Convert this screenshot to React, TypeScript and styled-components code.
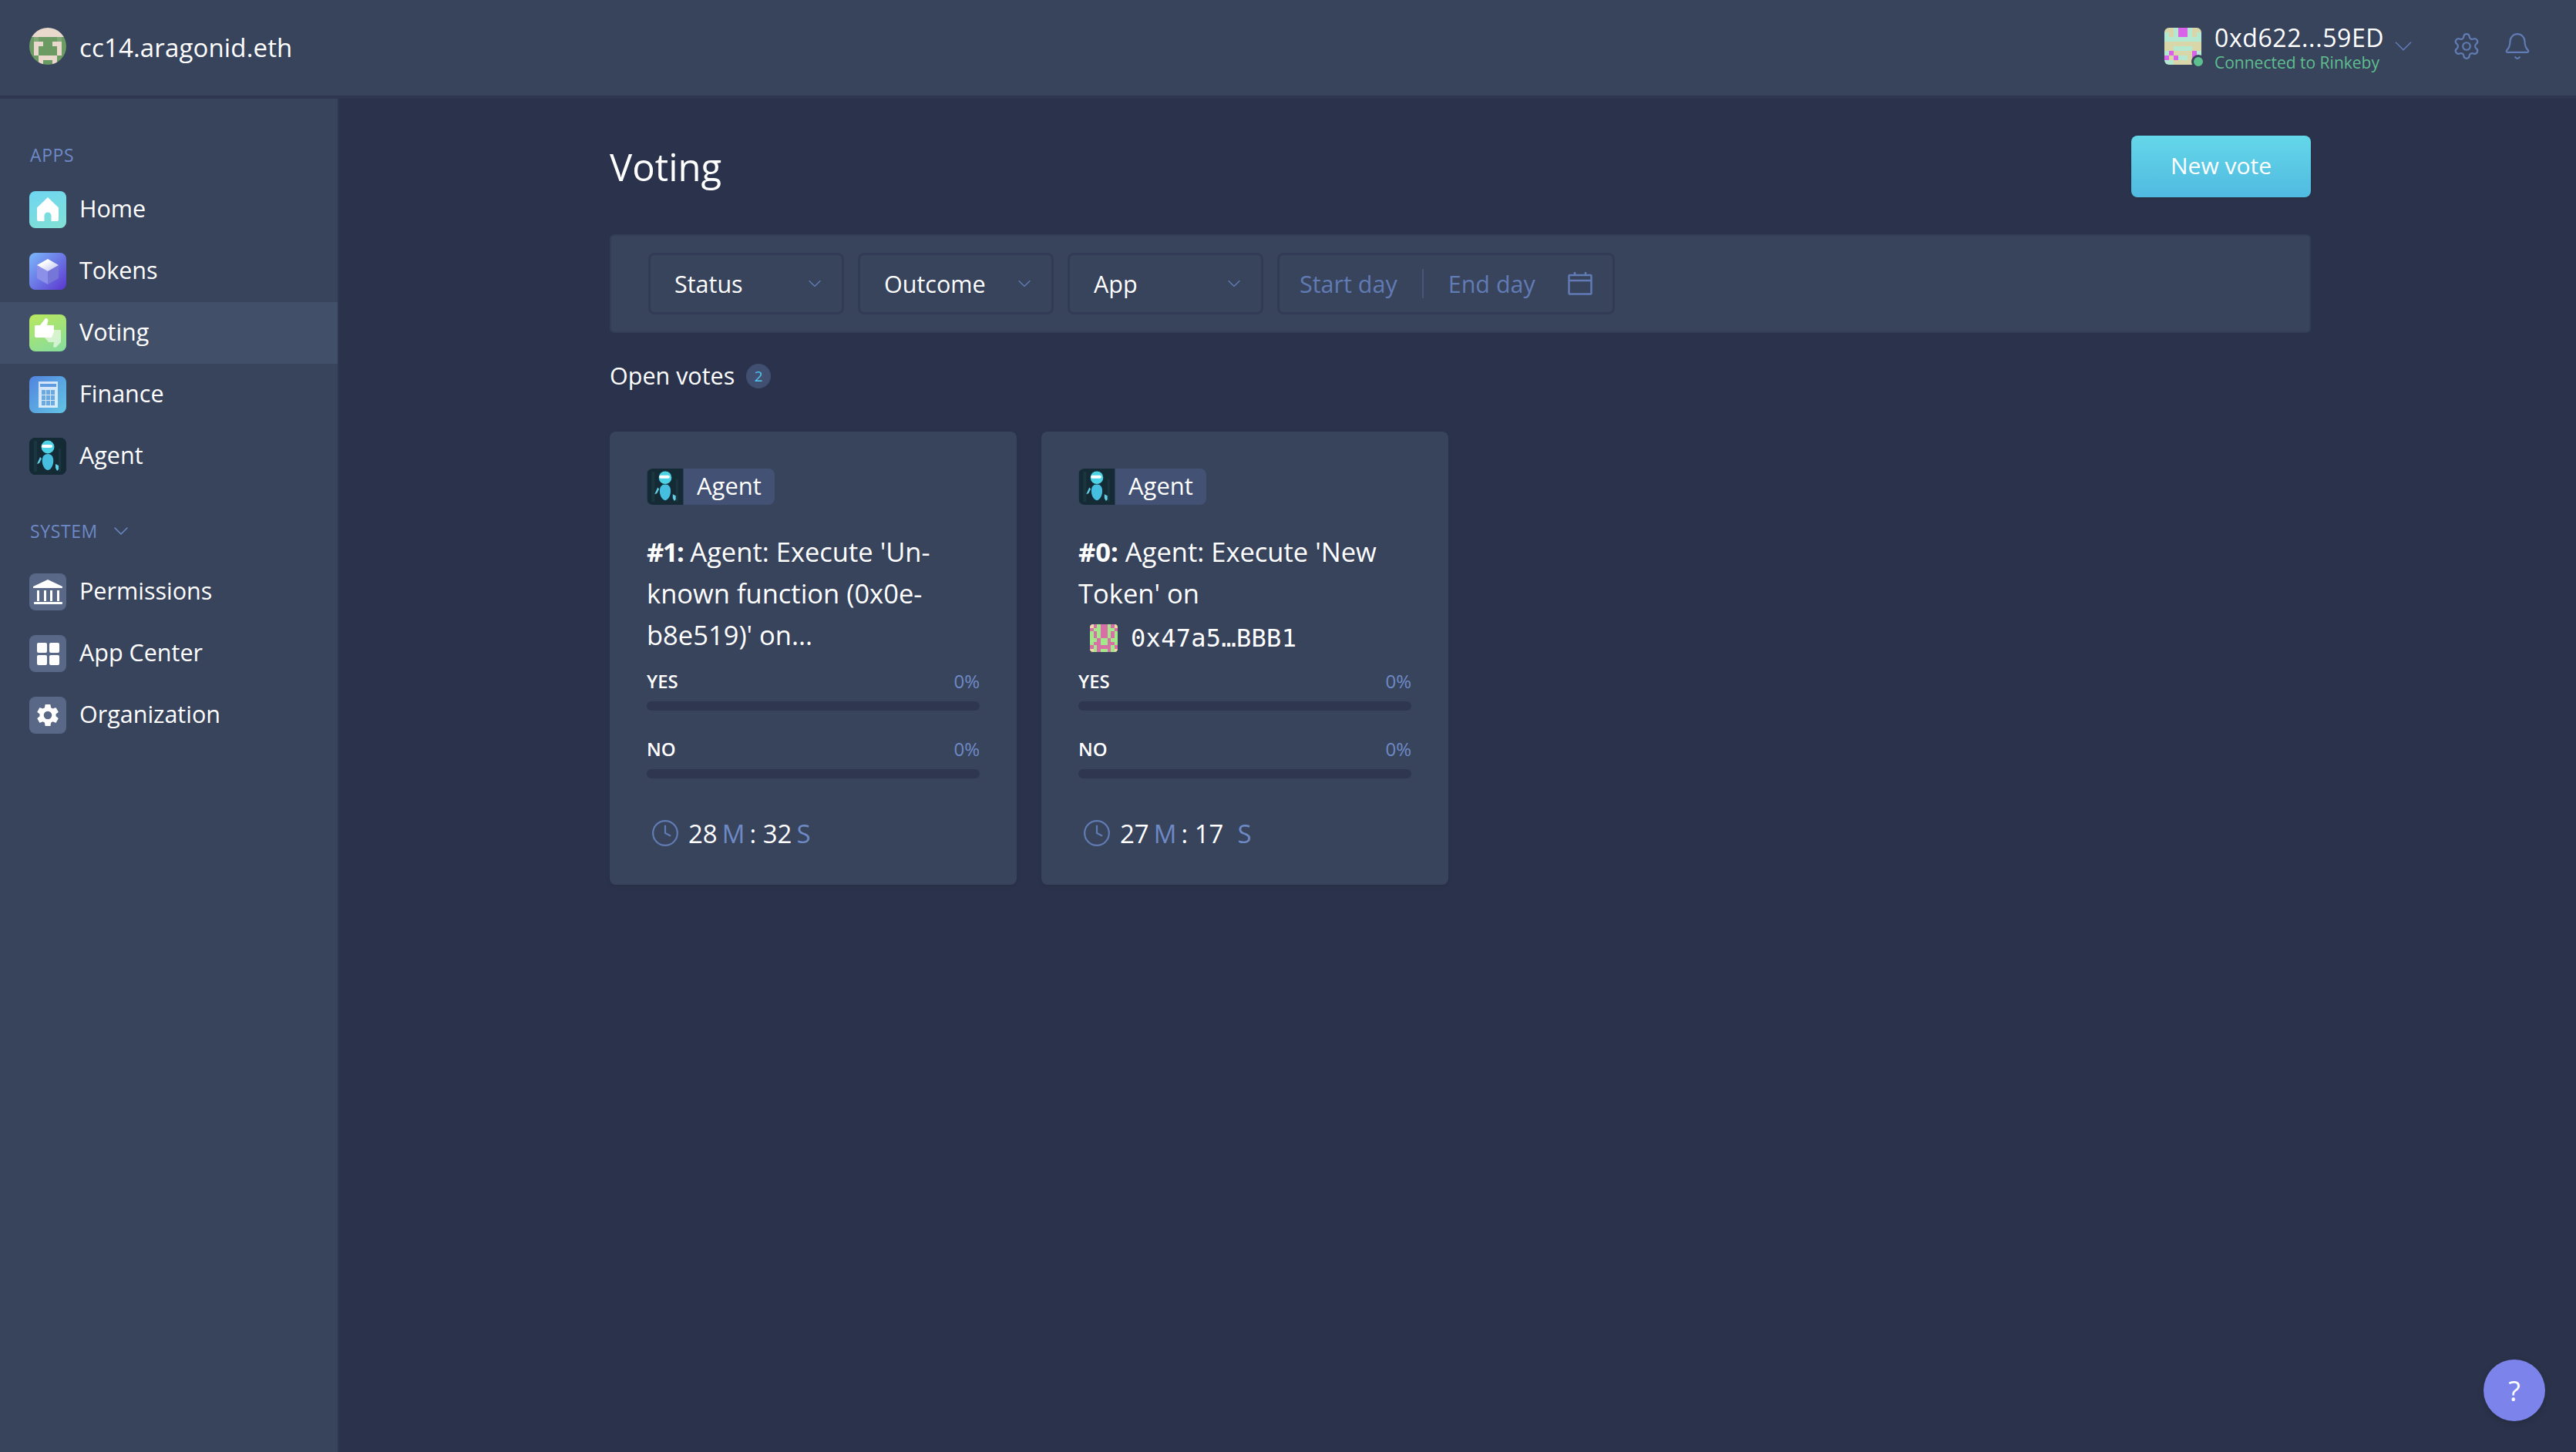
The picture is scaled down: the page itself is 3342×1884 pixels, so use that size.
import styled, { createGlobalStyle } from 'styled-components';
import { Bell, ChevronDown, Clock, Settings } from 'lucide-react';

const BODY_FONT = '"Open Sans", "Noto Sans", sans-serif';
const PAGE_BG = '#2b334c';

const GlobalStyle = createGlobalStyle`
  html, body {
    margin: 0;
    padding: 0;
    height: 100%;
    background: ${PAGE_BG};
  }

  * {
    box-sizing: border-box;
  }

  #root {
    height: 100%;
  }
`;

const Page = styled.div`
  width: 3342px;
  height: 1884px;
  display: flex;
  flex-direction: column;
  position: relative;
  overflow: hidden;
  background: ${PAGE_BG};
  color: #fff;
  font-family: ${BODY_FONT};
`;

const TopBar = styled.header`
  height: 128px;
  flex-shrink: 0;
  display: flex;
  align-items: center;
  justify-content: space-between;
  padding: 0 57px 4px 38px;
  background: #38435c;
  border-bottom: 4px solid #2f3650;
`;

const OrgButton = styled.div`
  display: flex;
  align-items: center;
  gap: 17px;
`;

const OrgName = styled.span`
  padding-top: 3px;
  font-size: 33px;
  letter-spacing: 0.15px;
`;

const AccountGroup = styled.div`
  display: flex;
  align-items: center;
`;

const AccountAvatar = styled.div`
  position: relative;
  width: 48px;
  height: 48px;
  margin-right: 17px;
`;

const OnlineDot = styled.span`
  position: absolute;
  right: -5px;
  bottom: -5px;
  width: 18px;
  height: 18px;
  border-radius: 50%;
  background: #5ebf8f;
  border: 3px solid #38435c;
`;

const AccountText = styled.div`
  display: flex;
  flex-direction: column;
  width: 226px;
  padding-top: 3px;
`;

const AccountName = styled.span`
  font-size: 32px;
  line-height: 38px;
  letter-spacing: 0.6px;
`;

const AccountStatus = styled.span`
  font-size: 21px;
  line-height: 26px;
  color: #5ebf8f;
`;

const HeaderIcon = styled.span<{ $left: number }>`
  display: flex;
  margin-left: ${({ $left }) => $left}px;
  color: #617bb4;
`;

const Body = styled.div`
  flex: 1;
  display: flex;
  min-height: 0;
`;

const Sidebar = styled.nav`
  width: 440px;
  flex-shrink: 0;
  padding-top: 56px;
  background: #38435c;
  border-right: 2px solid #2f3650;
`;

const SectionLabel = styled.div<{ $bottom: number }>`
  display: flex;
  align-items: center;
  gap: 14px;
  height: 34px;
  padding-left: 39px;
  margin-bottom: ${({ $bottom }) => $bottom}px;
  font-size: 23px;
  letter-spacing: 0.6px;
  color: #6e8ac6;
`;

const NavGroup = styled.div`
  margin-bottom: 40px;
`;

const NavItem = styled.div<{ $active?: boolean }>`
  height: 80px;
  display: flex;
  align-items: center;
  gap: 17px;
  padding-left: 38px;
  font-size: 30.5px;
  background: ${({ $active }) => ($active ? '#414f69' : 'transparent')};
`;

const NavLabel = styled.span`
  padding-bottom: 4px;
`;

const AppTile = styled.div<{ $bg: string }>`
  width: 48px;
  height: 48px;
  flex-shrink: 0;
  border-radius: 8px;
  overflow: hidden;
  background: ${({ $bg }) => $bg};

  svg {
    display: block;
  }
`;

const Main = styled.main`
  flex: 1;
  padding: 48px 0 0 351px;
`;

const Content = styled.div`
  width: 2207px;
`;

const TitleRow = styled.div`
  height: 80px;
  display: flex;
  align-items: center;
  justify-content: space-between;
  margin-bottom: 48px;
`;

const Title = styled.h1`
  margin: 0;
  font-size: 49px;
  font-weight: 400;
`;

const PrimaryButton = styled.button`
  width: 233px;
  height: 80px;
  padding: 0 0 4px;
  border: 0;
  border-radius: 8px;
  background: linear-gradient(#64d7e9, #50bae0);
  color: #fff;
  font-family: ${BODY_FONT};
  font-size: 30px;
  box-shadow: 0 1px 3px rgba(0, 0, 0, 0.15);
`;

const FilterBar = styled.div`
  height: 128px;
  display: flex;
  align-items: center;
  gap: 18px;
  padding: 0 48px;
  background: #38435c;
  border: 2px solid #343d56;
  border-radius: 6px;
`;

const FilterButton = styled.div<{ $width: number }>`
  width: ${({ $width }) => $width}px;
  height: 80px;
  display: flex;
  align-items: center;
  justify-content: space-between;
  padding: 0 21px 0 31px;
  border: 3px solid #323b55;
  border-radius: 8px;
  font-size: 30.5px;

  svg {
    color: #617bb4;
  }
`;

const DateText = styled.span`
  color: #617bb4;
`;

const DateDivider = styled.span`
  width: 2px;
  height: 38px;
  margin: 0 32px;
  background: #465578;
`;

const DateRange = styled(FilterButton)`
  justify-content: flex-start;
  padding: 0 26px;

  svg {
    margin-left: auto;
  }
`;

const ListHeading = styled.div`
  display: flex;
  align-items: center;
  gap: 15px;
  height: 32px;
  margin: 40px 0 56px;
  font-size: 30.5px;
`;

const ListHeadingLabel = styled.span`
  padding-bottom: 3px;
`;

const CountBadge = styled.span`
  width: 32px;
  height: 32px;
  display: flex;
  align-items: center;
  justify-content: center;
  border-radius: 50%;
  background: #415070;
  color: #52c4ef;
  font-size: 19px;
`;

const CardRow = styled.div`
  display: flex;
  gap: 32px;
`;

const Card = styled.article`
  width: 528px;
  height: 588px;
  padding: 48px;
  background: #38435c;
  border-radius: 8px;
  box-shadow: 0 2px 4px rgba(0, 0, 0, 0.08);
`;

const AppBadge = styled.div`
  width: 166px;
  height: 47px;
  display: flex;
  align-items: center;
  gap: 17px;
  margin-bottom: 34px;
  overflow: hidden;
  border-radius: 8px;
  background: #435274;
  font-size: 31px;
`;

const AppBadgeLabel = styled.span`
  padding-bottom: 3px;
`;

const AppBadgeIcon = styled.div`
  width: 48px;
  height: 47px;
  flex-shrink: 0;

  svg {
    display: block;
  }
`;

const VoteTitle = styled.div`
  height: 162px;
  margin-bottom: 17px;
  font-size: 34.5px;
  line-height: 54px;
`;

const VoteId = styled.strong<{ $tracking: number }>`
  font-weight: 700;
  letter-spacing: ${({ $tracking }) => $tracking}px;
`;

const AddressLine = styled.div`
  display: flex;
  align-items: center;
  gap: 17px;
  padding: 4px 0 0 15px;
`;

const Address = styled.span`
  font-family: "DejaVu Sans Mono", "Liberation Mono", monospace;
  font-size: 32px;
  letter-spacing: 0.3px;
`;

const OptionRow = styled.div`
  margin-bottom: 34px;
`;

const OptionLabels = styled.div`
  height: 30px;
  display: flex;
  align-items: center;
  justify-content: space-between;
  margin-bottom: 12px;
  font-size: 24px;
  font-weight: 600;
`;

const Percent = styled.span`
  color: #6e8ac6;
  font-weight: 400;
`;

const BarTrack = styled.div`
  height: 12px;
  border-radius: 6px;
  background: #2f3650;
`;

const Timer = styled.div`
  display: flex;
  align-items: center;
  height: 40px;
  margin-top: 51px;
  padding-left: 5px;
  font-size: 33px;

  svg {
    color: #617bb4;
    margin-right: 11px;
  }
`;

const TimerUnit = styled.span<{ $left?: number }>`
  margin: 0 6px 0 ${({ $left }) => $left ?? 6}px;
  color: #6e8ac6;
`;

const HelpButton = styled.div`
  position: absolute;
  left: 3222px;
  top: 1764px;
  width: 80px;
  height: 80px;
  display: flex;
  align-items: center;
  justify-content: center;
  border-radius: 50%;
  background: #7c84eb;
  font-size: 36px;
  box-shadow: 0 2px 8px rgba(0, 0, 0, 0.2);
`;

const Blockie = ({ rows, colors, size, radius = 0 }: { rows: string[]; colors: Record<string, string>; size: number; radius?: number }) => (
  <svg width={size} height={size} viewBox="0 0 8 8" shapeRendering="crispEdges" style={{ borderRadius: radius, display: 'block' }}>
    {rows.flatMap((row, y) =>
      row.split('').map((c, x) => <rect key={`${x}-${y}`} x={x} y={y} width={1} height={1} fill={colors[c]} />),
    )}
  </svg>
);

const ORG_PIXELS = ['bbbbbbbb', 'bbbbbbbb', 'gLggggLg', 'gbbggbbg', 'gbggggbg', 'gbggggbg', 'ggbbbbgg', 'ggbggbgg'];
const ORG_COLORS = { b: '#e9d8cc', g: '#6b9a63', L: '#80a878' };

const WALLET_PIXELS = ['kkmppmkk', 'mkmppmkm', 'mmmmmmmm', 'kkkkkkkk', 'kkmmmmkk', 'mpkkkkpm', 'pkpmmkpk', 'mmkkkkmm'];
const WALLET_COLORS = { k: '#d9d7a9', m: '#b4e8d0', p: '#d862e8' };

const TOKEN_PIXELS = ['bpgppgpb', 'pggppggp', 'gpgppgpg', 'gpgppgpg', 'ggpggpgg', 'gppggppg', 'pgppppgp', 'bgpggpgb'];
const TOKEN_COLORS = { b: '#efd9a9', p: '#d870a8', g: '#a3e98b' };

const HomeIcon = () => (
  <svg width="48" height="48" viewBox="0 0 48 48">
    <path fill="#fff" d="M10 21.500 24 8l14 13.500V37a2 2 0 0 1-2 2h-7.500V32a4.500 4.500 0 0 0-9 0v7H12a2 2 0 0 1-2-2z" />
  </svg>
);

const TokensIcon = () => (
  <svg width="48" height="48" viewBox="0 0 48 48">
    <defs>
      <linearGradient id="cubeTop" x1="0" y1="0" x2="1" y2="1">
        <stop offset="0.3" stopColor="#fff" />
        <stop offset="1" stopColor="#b9bdf3" />
      </linearGradient>
    </defs>
    <path fill="#8d90e8" d="M10 16v17l14 8V24z" />
    <path fill="#7675d8" d="M38 16v17l-14 8V24z" />
    <path fill="url(#cubeTop)" d="m24 8 14 8-14 8-14-8z" />
  </svg>
);

const VotingIcon = () => (
  <svg width="48" height="48" viewBox="0 0 48 48">
    <path fill="#fff" fillOpacity="0.6" d="M21 20h19a1 1 0 0 1 1 1v15l-7 7-3-1 1-6H25l-5-6z" />
    <path fill="#fff" d="M7 16a2 2 0 0 1 2-2h5l7-9c3 0 4 2 3 5l-1 4h9v8l-3 8H9a2 2 0 0 1-2-2z" />
  </svg>
);

const FinanceIcon = () => (
  <svg width="48" height="48" viewBox="0 0 48 48">
    <rect x="12" y="7" width="25" height="34" fill="#fff" fillOpacity="0.75" />
    <rect x="14" y="10" width="21" height="4" fill="#5f9be0" />
    {[0, 1, 2].flatMap((r) =>
      [0, 1, 2].map((c) => (
        <rect key={`${r}${c}`} x={16 + c * 6} y={18 + r * 7} width="5" height="6" fill="#6aa9e2" />
      )),
    )}
  </svg>
);

const AgentIcon = ({ width = 48, height = 48 }: { width?: number; height?: number }) => (
  <svg width={width} height={height} viewBox="0 0 48 48">
    <rect width="48" height="48" fill="#142a35" />
    <rect x="6" y="4" width="4" height="40" fill="#1c3641" />
    <rect x="38" y="14" width="3" height="30" fill="#1c3641" />
    <circle cx="24" cy="12" r="8.500" fill="#4cd2e4" />
    <rect x="16" y="9" width="14" height="4" rx="2" fill="#fff" />
    <path fill="#45bee0" d="M24 21c6 0 8 5 7 12-1 5-4 9-7 9s-6-4-7-9c-1-7 1-12 7-12z" />
    <path fill="#63cfe6" d="m14 25 2 2-3 6-3 1zM34 34l4 2 0 5-2 2-2-4z" />
  </svg>
);

const PermissionsIcon = () => (
  <svg width="48" height="48" viewBox="0 0 48 48" fill="#fff">
    <path d="M24 8 43 17v2H5v-2z" />
    <rect x="10" y="22" width="3" height="14" />
    <rect x="19" y="22" width="3" height="14" />
    <rect x="27" y="22" width="3" height="14" />
    <rect x="36" y="22" width="3" height="14" />
    <rect x="6" y="37" width="37" height="3" rx="1" />
  </svg>
);

const AppCenterIcon = () => (
  <svg width="48" height="48" viewBox="0 0 48 48" fill="#fff">
    <rect x="10" y="10" width="13" height="13" rx="2" />
    <rect x="26" y="10" width="13" height="13" rx="2" />
    <rect x="10" y="26" width="13" height="13" rx="2" />
    <rect x="26" y="26" width="13" height="13" rx="2" />
  </svg>
);

const OrganizationIcon = () => (
  <svg width="48" height="48" viewBox="0 0 24 24">
    <g transform="translate(3.200 3.200) scale(0.733)">
      <path fill="#fff" fillRule="evenodd" d="M19.140 12.940a7.100 7.100 0 0 0 0-1.880l2.030-1.580a.5.500 0 0 0 .12-.61l-1.920-3.320a.5.500 0 0 0-.59-.22l-2.390.96a7 7 0 0 0-1.620-.94l-.36-2.540a.5.500 0 0 0-.48-.41h-3.840a.5.500 0 0 0-.47.41l-.36 2.540a7.400 7.400 0 0 0-1.620.94l-2.390-.96a.5.500 0 0 0-.59.22L2.750 8.870a.5.500 0 0 0 .12.61l2.030 1.580a7.300 7.300 0 0 0 0 1.880l-2.030 1.580a.5.500 0 0 0-.12.61l1.920 3.320c.12.220.37.290.59.220l2.390-.96c.5.380 1.040.7 1.620.94l.36 2.540c.05.240.24.410.48.410h3.840c.24 0 .44-.17.47-.41l.36-2.540a7 7 0 0 0 1.620-.94l2.390.96c.22.080.47 0 .59-.22l1.920-3.320a.5.500 0 0 0-.12-.61zM12 15.600a3.600 3.600 0 1 1 0-7.200 3.600 3.600 0 0 1 0 7.200z" />
    </g>
  </svg>
);

const CalendarIcon = () => (
  <svg width="32" height="30" viewBox="0 0 32 30" fill="none" stroke="currentColor" strokeWidth="2.500">
    <rect x="1.500" y="4" width="29" height="24.500" rx="1" />
    <path d="M1.500 11h29M9 0v5M23 0v5" />
  </svg>
);

const CARD_GRAY = '#5a6888';

const apps = [
  { name: 'Home', bg: 'linear-gradient(160deg, #6fd6f2, #82e0d4)', icon: <HomeIcon /> },
  { name: 'Tokens', bg: 'linear-gradient(135deg, #7cb8fb, #5b36cf)', icon: <TokensIcon /> },
  { name: 'Voting', bg: 'linear-gradient(160deg, #b9e85e, #85dc9f)', icon: <VotingIcon />, active: true },
  { name: 'Finance', bg: 'linear-gradient(135deg, #5284e0, #62c5e3)', icon: <FinanceIcon /> },
  { name: 'Agent', bg: '#142a35', icon: <AgentIcon /> },
];

const systemApps = [
  { name: 'Permissions', icon: <PermissionsIcon /> },
  { name: 'App Center', icon: <AppCenterIcon /> },
  { name: 'Organization', icon: <OrganizationIcon /> },
];

const votes = [
  {
    id: '#1:',
    tracking: -1.5,
    title: <> Agent: Execute 'Un-<br />known function (0x0e-<br />b8e519)' on...</>,
    minutes: '28',
    seconds: '32',
    secondsGap: 6,
  },
  {
    id: '#0:',
    tracking: 0,
    title: (
      <>
        {' '}Agent: Execute 'New<br />Token' on
        <AddressLine>
          <Blockie rows={TOKEN_PIXELS} colors={TOKEN_COLORS} size={36} radius={4} />
          <Address>0x47a5…BBB1</Address>
        </AddressLine>
      </>
    ),
    minutes: '27',
    seconds: '17',
    secondsGap: 18,
  },
];

const App = () => {
  return (
    <Page>
      <GlobalStyle />
      <TopBar>
        <OrgButton>
          <Blockie rows={ORG_PIXELS} colors={ORG_COLORS} size={48} radius={24} />
          <OrgName>cc14.aragonid.eth</OrgName>
        </OrgButton>
        <AccountGroup>
          <AccountAvatar>
            <Blockie rows={WALLET_PIXELS} colors={WALLET_COLORS} size={48} radius={6} />
            <OnlineDot />
          </AccountAvatar>
          <AccountText>
            <AccountName>0xd622...59ED</AccountName>
            <AccountStatus>Connected to Rinkeby</AccountStatus>
          </AccountText>
          <HeaderIcon $left={0}>
            <ChevronDown size={38} strokeWidth={1.1} />
          </HeaderIcon>
          <HeaderIcon $left={44}>
            <Settings size={38} strokeWidth={1.4} />
          </HeaderIcon>
          <HeaderIcon $left={28}>
            <Bell size={38} strokeWidth={1.4} />
          </HeaderIcon>
        </AccountGroup>
      </TopBar>
      <Body>
        <Sidebar>
          <SectionLabel $bottom={14}>APPS</SectionLabel>
          <NavGroup>
            {apps.map((app) => (
              <NavItem key={app.name} $active={app.active}>
                <AppTile $bg={app.bg}>{app.icon}</AppTile>
                <NavLabel>{app.name}</NavLabel>
              </NavItem>
            ))}
          </NavGroup>
          <SectionLabel $bottom={22}>
            SYSTEM
            <ChevronDown size={32} strokeWidth={1.1} />
          </SectionLabel>
          {systemApps.map((app) => (
            <NavItem key={app.name}>
              <AppTile $bg={CARD_GRAY}>{app.icon}</AppTile>
              <NavLabel>{app.name}</NavLabel>
            </NavItem>
          ))}
        </Sidebar>
        <Main>
          <Content>
            <TitleRow>
              <Title>Voting</Title>
              <PrimaryButton>New vote</PrimaryButton>
            </TitleRow>
            <FilterBar>
              {['Status', 'Outcome', 'App'].map((label) => (
                <FilterButton key={label} $width={254}>
                  {label}
                  <ChevronDown size={28} strokeWidth={1.2} />
                </FilterButton>
              ))}
              <DateRange $width={438}>
                <DateText>Start day</DateText>
                <DateDivider />
                <DateText>End day</DateText>
                <CalendarIcon />
              </DateRange>
            </FilterBar>
            <ListHeading>
              <ListHeadingLabel>Open votes</ListHeadingLabel>
              <CountBadge>2</CountBadge>
            </ListHeading>
            <CardRow>
              {votes.map((vote) => (
                <Card key={vote.id}>
                  <AppBadge>
                    <AppBadgeIcon>
                      <AgentIcon width={48} height={47} />
                    </AppBadgeIcon>
                    <AppBadgeLabel>Agent</AppBadgeLabel>
                  </AppBadge>
                  <VoteTitle>
                    <VoteId $tracking={vote.tracking}>{vote.id}</VoteId>
                    {vote.title}
                  </VoteTitle>
                  {['YES', 'NO'].map((option) => (
                    <OptionRow key={option}>
                      <OptionLabels>
                        {option}
                        <Percent>0%</Percent>
                      </OptionLabels>
                      <BarTrack />
                    </OptionRow>
                  ))}
                  <Timer>
                    <Clock size={38} strokeWidth={1.4} />
                    {vote.minutes}
                    <TimerUnit>M</TimerUnit>:&nbsp;{vote.seconds}
                    <TimerUnit $left={vote.secondsGap}>S</TimerUnit>
                  </Timer>
                </Card>
              ))}
            </CardRow>
          </Content>
        </Main>
      </Body>
      <HelpButton>?</HelpButton>
    </Page>
  );
};

export default App;
